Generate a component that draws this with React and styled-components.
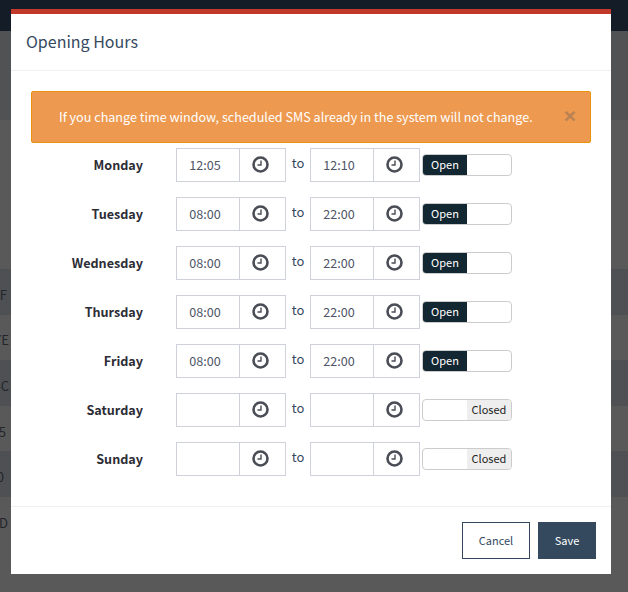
import styled, { createGlobalStyle } from "styled-components"

const GlobalStyle = createGlobalStyle`
    html, body {
        margin: 0;
        padding: 0;
        height: 100%;
    }
    body {
        font-family: "Noto Sans CJK SC", "Noto Sans", sans-serif;
        overflow: hidden;
    }
`

const Page = styled.div`
    position: relative;
    width: 628px;
    height: 592px;
    overflow: hidden;
    background-color: #595959;
`

const TopBar = styled.div`
    height: 31px;
    background-color: #131c27;
`

const Band = styled.div`
    height: 89px;
    background-color: #505254;
`

const BackTable = styled.div`
    padding-top: 149px;
`

const BackRow = styled.div`
    height: 45.6px;
    display: flex;
    align-items: center;
    padding-top: 5px;
    box-sizing: border-box;
    font-size: 13px;
    color: #23262b;
    background-color: ${(p) => (p.$dark ? "#4e5054" : "#595959")};
`

const BackCell = styled.div`
    width: ${(p) => p.$width}px;
    display: flex;
    justify-content: flex-end;
    overflow: hidden;
`

const Modal = styled.div`
    position: absolute;
    top: 9px;
    left: 11px;
    width: 600px;
    height: 565px;
    background-color: #fff;
    border-top: 5px solid #c0392b;
    box-sizing: border-box;
    display: flex;
    flex-direction: column;
`

const ModalHeader = styled.div`
    height: 57px;
    box-sizing: border-box;
    padding: 0 15px 2px;
    display: flex;
    align-items: center;
    border-bottom: 1px solid #f0f0f0;
`

const Title = styled.h4`
    margin: 0;
    font-size: 16px;
    font-weight: 400;
    color: #34495e;
`

const ModalBody = styled.div`
    flex: 1;
    padding: 20px 20px 0;
`

const Alert = styled.div`
    height: 52px;
    box-sizing: border-box;
    padding: 0 14px 2px 27px;
    display: flex;
    align-items: center;
    justify-content: space-between;
    background-color: #ed994f;
    border: 1px solid #e8920f;
    border-radius: 2px;
    color: #fff;
    font-size: 12.6px;
`

const CloseMark = styled.span`
    font-family: "Liberation Sans", sans-serif;
    font-size: 21px;
    font-weight: 700;
    line-height: 1;
    padding-bottom: 2px;
    color: #b98154;
`

const Rows = styled.div`
    margin-top: 5px;
    display: flex;
    flex-direction: column;
    gap: 15px;
`

const DayRow = styled.div`
    display: flex;
    align-items: center;
    height: 34px;
`

const DayLabel = styled.label`
    width: 112px;
    margin-right: 33px;
    padding-bottom: 2px;
    text-align: right;
    font-size: 12.6px;
    font-weight: 700;
    color: #2c2c35;
`

const TimeInput = styled.div`
    width: 110px;
    height: 34px;
    box-sizing: border-box;
    display: flex;
    border: 1px solid #cfd2dc;
`

const TimeValue = styled.div`
    width: 63px;
    box-sizing: border-box;
    display: flex;
    align-items: center;
    justify-content: center;
    padding: 0 6px 1px 0;
    border-right: 1px solid #cfd2dc;
    font-size: 12.6px;
    color: #4d5566;
`

const ClockCell = styled.div`
    flex: 1;
    display: flex;
    align-items: center;
    justify-content: center;
    padding: 0 4px 2px 0;
`

const To = styled.span`
    width: 24px;
    text-align: center;
    padding-bottom: 6px;
    font-size: 13px;
    color: #34495e;
`

const Toggle = styled.div`
    margin-left: 2px;
    width: 90px;
    height: 22px;
    box-sizing: border-box;
    display: flex;
    justify-content: ${(p) => (p.$open ? "flex-start" : "flex-end")};
    border: 1px solid #ccc;
    border-radius: 4px;
    overflow: hidden;
    background-color: #fff;
`

const ToggleLabel = styled.span`
    width: 44px;
    padding-bottom: 2px;
    display: flex;
    align-items: center;
    justify-content: center;
    font-size: 11px;
    color: ${(p) => (p.$open ? "#fff" : "#222")};
    background-color: ${(p) => (p.$open ? "#132733" : "#eee")};
`

const ModalFooter = styled.div`
    height: 68px;
    box-sizing: border-box;
    padding: 15px 15px 0;
    display: flex;
    justify-content: flex-end;
    gap: 8px;
    border-top: 1px solid #f0f0f0;
`

const Button = styled.button`
    height: 37px;
    width: ${(p) => (p.$primary ? "58px" : "68px")};
    padding: 0 0 2px;
    font-family: inherit;
    font-size: 11px;
    border: 1px solid #34495e;
    color: ${(p) => (p.$primary ? "#fff" : "#34495e")};
    background-color: ${(p) => (p.$primary ? "#34495e" : "#fff")};
    cursor: pointer;
`

const ClockIcon = () => (
    <svg width="17" height="17" viewBox="0 0 17 17" fill="none">
        <circle cx="8.5" cy="8.5" r="7" stroke="#4a4d55" strokeWidth="2.6" />
        <path d="M9 4.5v4.5H5.5" stroke="#4a4d55" strokeWidth="1.4" />
    </svg>
)

const days = [
    { name: "Monday", from: "12:05", to: "12:10", open: true },
    { name: "Tuesday", from: "08:00", to: "22:00", open: true },
    { name: "Wednesday", from: "08:00", to: "22:00", open: true },
    { name: "Thursday", from: "08:00", to: "22:00", open: true },
    { name: "Friday", from: "08:00", to: "22:00", open: true },
    { name: "Saturday", from: "", to: "", open: false },
    { name: "Sunday", from: "", to: "", open: false },
]

const backRows = [
    { text: "4F", width: 7 },
    { text: "7E", width: 9 },
    { text: "4C", width: 9 },
    { text: "15", width: 6 },
    { text: "00", width: 4 },
    { text: "0D", width: 8 },
]

const TimeField = ({ value }) => (
    <TimeInput>
        <TimeValue>{value}</TimeValue>
        <ClockCell>
            <ClockIcon />
        </ClockCell>
    </TimeInput>
)

const App = () => {
    return (
        <Page>
            <GlobalStyle />
            <TopBar />
            <Band />
            <BackTable>
                {backRows.map((row, i) => (
                    <BackRow key={row.text} $dark={i % 2 === 0}>
                        <BackCell $width={row.width}>{row.text}</BackCell>
                    </BackRow>
                ))}
            </BackTable>
            <Modal>
                <ModalHeader>
                    <Title>Opening Hours</Title>
                </ModalHeader>
                <ModalBody>
                    <Alert>
                        If you change time window, scheduled SMS already in the system will not change.
                        <CloseMark>×</CloseMark>
                    </Alert>
                    <Rows>
                        {days.map((d) => (
                            <DayRow key={d.name}>
                                <DayLabel>{d.name}</DayLabel>
                                <TimeField value={d.from} />
                                <To>to</To>
                                <TimeField value={d.to} />
                                <Toggle $open={d.open}>
                                    <ToggleLabel $open={d.open}>{d.open ? "Open" : "Closed"}</ToggleLabel>
                                </Toggle>
                            </DayRow>
                        ))}
                    </Rows>
                </ModalBody>
                <ModalFooter>
                    <Button>Cancel</Button>
                    <Button $primary>Save</Button>
                </ModalFooter>
            </Modal>
        </Page>
    )
}

export default App
